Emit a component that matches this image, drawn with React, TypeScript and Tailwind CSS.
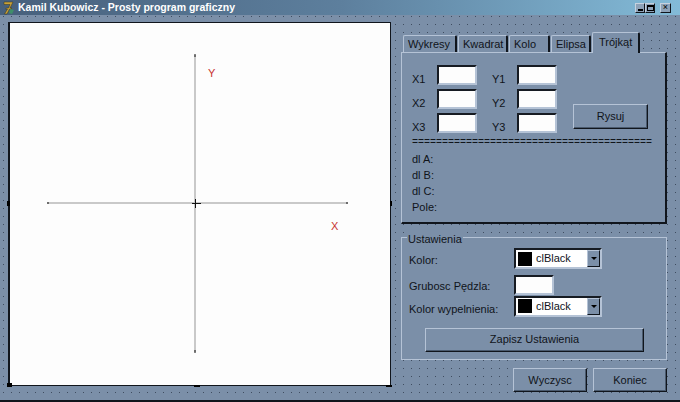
const raisedBtn = "flex items-center justify-center bg-[#7b8fa8] border border-t-[#b5c3d6] border-l-[#b5c3d6] border-r-[#10151c] border-b-[#10151c] shadow-[inset_-1px_-1px_0_#4a5a6e] text-[#10141a]"
const sunkenField = "bg-[#fdfdfd] border-2 border-t-[#161b22] border-l-[#161b22] border-r-[#b5c3d6] border-b-[#b5c3d6]"

function Field({ className = "" }: { className?: string }) {
  return <div className={`w-10 h-5 ${sunkenField} ${className}`} />
}

function Tab({ label, width, active }: { label: string; width: string; active?: boolean }) {
  return (
    <div
      className={`${width} flex items-center border-l border-t border-[#b5c3d6] border-r-2 border-r-[#10151c] rounded-t-[2px] bg-[#7b8fa8] ${
        active ? "h-[21px] -mb-px z-10 pl-[6px] pb-[2px]" : "h-[17px] mr-px pl-[4px]"
      }`}
    >
      {label}
    </div>
  )
}

function ColorCombo() {
  return (
    <div className={`w-[88px] h-[21px] flex items-center ${sunkenField} bg-white`}>
      <div className="w-[14px] h-[14px] bg-black ml-[2px]" />
      <span className="ml-1 flex-1">clBlack</span>
      <div className="w-[13px] h-[17px] bg-[#7b8fa8] border border-t-[#b5c3d6] border-l-[#b5c3d6] border-r-[#10151c] border-b-[#10151c] flex items-center justify-center">
        <div className="w-0 h-0 border-x-[3px] border-x-transparent border-t-[3px] border-t-black" />
      </div>
    </div>
  )
}

function Handle({ className }: { className: string }) {
  return <div className={`absolute bg-black ${className}`} />
}

function Canvas() {
  return (
    <div className="relative w-[383px] h-[364px] bg-[#fdfdfd] border border-l-2 border-[#10151c]">
      <svg className="absolute inset-0" width="380" height="362" viewBox="10 23 380 362">
        <line x1="47" y1="203" x2="348" y2="203" stroke="#c9c9c9" strokeWidth="2" />
        <line x1="195" y1="55" x2="195" y2="352" stroke="#c9c9c9" strokeWidth="2" />
        <line x1="47" y1="203" x2="49" y2="203" stroke="#111" />
        <line x1="346" y1="203" x2="348" y2="203" stroke="#111" />
        <line x1="195" y1="54" x2="195" y2="57" stroke="#111" />
        <line x1="195" y1="350" x2="195" y2="353" stroke="#111" />
        <line x1="192" y1="203.5" x2="201" y2="203.5" stroke="#111" />
        <line x1="195.5" y1="199" x2="195.5" y2="208" stroke="#111" />
        <text x="208" y="77" fill="#c8322f" fontSize="11">Y</text>
        <text x="331" y="230" fill="#c8322f" fontSize="11">X</text>
      </svg>
      <Handle className="-left-[3px] top-[178px] w-[3px] h-[5px]" />
      <Handle className="-left-[3px] -bottom-[2px] w-[5px] h-[4px]" />
      <Handle className="left-[184px] -bottom-[2px] w-[6px] h-[2px]" />
      <Handle className="-right-[2px] -bottom-[2px] w-[6px] h-[2px]" />
      <Handle className="-right-[2px] top-[178px] w-[2px] h-[5px]" />
    </div>
  )
}

export default function App() {
  return (
    <div className="w-[680px] h-[402px] overflow-hidden flex flex-col bg-[#7b8fa8] text-[11px] text-[#10141a] border-b-2 border-b-[#10151c] font-['Liberation_Sans',sans-serif]">
      <div className="h-[15px] shrink-0 flex items-center bg-gradient-to-r from-[#47607c] via-[#5d7f9d] to-[#83bbd8]">
        <svg className="ml-[3px]" width="12" height="14" viewBox="0 0 12 14">
          <path d="M1 1h9L7 7h2l-1 1H6.5L4 13H1.5L4.5 8H2.5l1-1h2L7 3.5H1z" fill="#c9a23a" stroke="#3a3418" strokeWidth="0.5" />
          <path d="M7 8l4 1-2 4-3-1z" fill="#3f8f6a" />
        </svg>
        <span className="ml-[3px] text-white font-bold text-[10.5px]">
          Kamil Kubowicz - Prosty program graficzny
        </span>
        <div className="ml-auto mr-[9px] flex">
          {["min", "max", "close"].map((kind) => (
            <div key={kind} className={`w-[10px] h-[10px] bg-[#8ea2b8] border border-t-[#c6d2df] border-l-[#c6d2df] border-r-[#10151c] border-b-[#10151c] flex items-center justify-center ${kind === "close" ? "ml-[5px] w-[11px]" : ""}`}>
              {kind === "min" && <div className="w-[5px] h-[2px] bg-black mt-[4px]" />}
              {kind === "max" && <div className="w-[7px] h-[6px] border border-t-2 border-black" />}
              {kind === "close" && <span className="text-[9px] leading-none text-black">×</span>}
            </div>
          ))}
        </div>
      </div>

      <div className="relative flex-1 flex gap-[10px] pl-[8px] pt-[7px] bg-[radial-gradient(circle_at_0.5px_0.5px,#3f4d60_0.7px,transparent_0.7px)] bg-[size:8px_8px] bg-[position:3px_1px]">
        <Canvas />

        <div className="w-[266px] flex flex-col">
          <div className="flex items-end h-[30px] pl-[2px] leading-none">
            <Tab label="Wykresy" width="w-[54px]" />
            <Tab label="Kwadrat" width="w-[50px]" />
            <Tab label="Kolo" width="w-[41px]" />
            <Tab label="Elipsa" width="w-[40px]" />
            <Tab label="Trójkąt" width="w-[48px]" active />
          </div>

          <div className="h-[172px] bg-[#7b8fa8] border border-[#b5c3d6] border-r-2 border-b-2 border-r-[#10151c] border-b-[#10151c] pl-[10px] pt-[12px]">
            <div className="flex">
              <div className="grid grid-cols-[25px_40px_40px_40px] auto-rows-[20px] gap-y-1 items-center">
                <span className="pt-2">X1</span><Field /><span className="pl-[15px] pt-2">Y1</span><Field />
                <span className="pt-2">X2</span><Field /><span className="pl-[15px] pt-2">Y2</span><Field />
                <span className="pt-2">X3</span><Field /><span className="pl-[15px] pt-2">Y3</span><Field />
              </div>
              <div className={`${raisedBtn} ml-[16px] mt-[39px] w-[75px] h-[25px]`}>Rysuj</div>
            </div>
            <div className="mt-[3px] leading-[14px] font-['Liberation_Mono',monospace] text-[10px] whitespace-nowrap">
              ========================================
            </div>
            <div className="mt-px flex flex-col leading-[16px]">
              <span>dl A:</span>
              <span>dl B:</span>
              <span>dl C:</span>
              <span>Pole:</span>
            </div>
          </div>

          <div className="relative mt-[13px] h-[123px] bg-[#7b8fa8] border border-[#b5c3d6] pl-[7px] pt-[10px]">
            <span className="absolute -top-[6px] left-[5px] bg-[#7b8fa8] px-px leading-[14px]">Ustawienia</span>
            <div className="grid grid-cols-[105px_88px] items-center">
              <span className="pt-1">Kolor:</span>
              <ColorCombo />
              <span className="mt-[6px] pt-[2px]">Grubosc Pędzla:</span>
              <Field className="mt-[6px]" />
              <span className="mt-[2px] pt-1">Kolor wypelnienia:</span>
              <ColorCombo />
            </div>
            <div className={`${raisedBtn} ml-[16px] mt-[10px] w-[219px] h-[24px]`}>Zapisz Ustawienia</div>
          </div>

          <div className="mt-[8px] flex justify-end gap-[6px]">
            <div className={`${raisedBtn} w-[74px] h-[24px]`}>Wyczysc</div>
            <div className={`${raisedBtn} w-[74px] h-[24px]`}>Koniec</div>
          </div>
        </div>
      </div>
    </div>
  )
}
